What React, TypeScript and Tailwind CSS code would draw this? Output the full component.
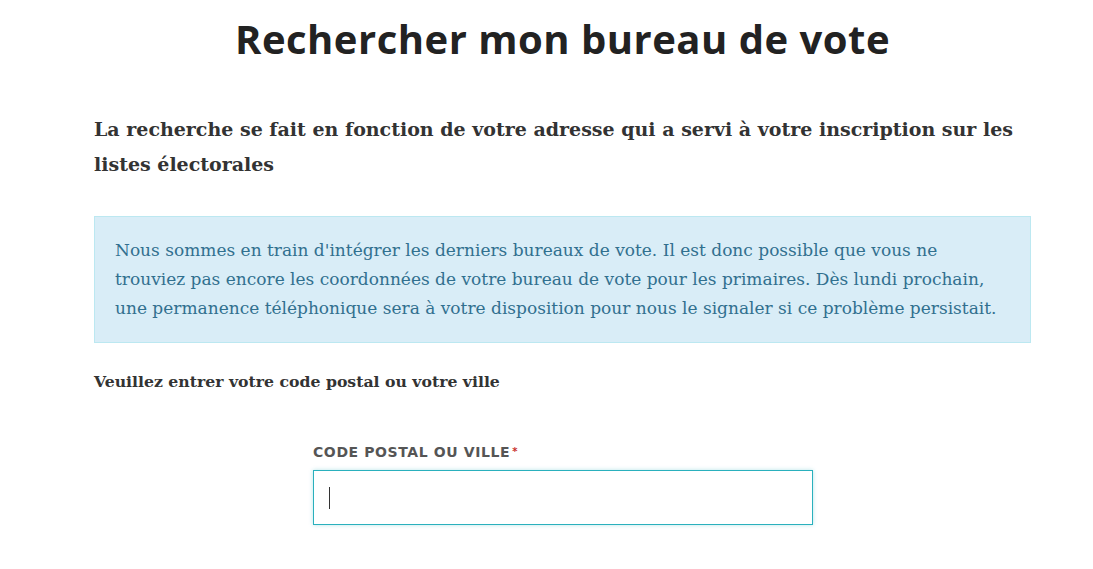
export default function App() {
  const serif = { fontFamily: '"DejaVu Serif", serif' };
  return (
    <div className="min-h-[569px] w-full bg-white">
      <div className="ml-[94px] w-[937px] pt-[14px]">
        <h1
          className="text-center text-[40px] font-bold leading-[50px] text-[#222] tracking-[0.5px]"
          style={{ fontFamily: '"Open Sans", sans-serif' }}
        >
          Rechercher mon bureau de vote
        </h1>

        <p className="mt-[48px] text-[19px] font-bold leading-[35px] text-[#333]" style={serif}>
          La recherche se fait en fonction de votre adresse qui a servi à votre inscription sur les listes électorales
        </p>

        <div className="mt-[34px] border border-[#bce8f1] bg-[#d9edf7] px-[20px] pt-[19px] pb-[19px]">
          <p className="text-[17px] leading-[29px] text-[#31708f]" style={serif}>
            Nous sommes en train d'intégrer les derniers bureaux de vote. Il est donc possible que vous ne trouviez pas encore les coordonnées de votre bureau de vote pour les primaires. Dès lundi prochain, une permanence téléphonique sera à votre disposition pour nous le signaler si ce problème persistait.
          </p>
        </div>

        <p className="mt-[27px] text-[15.7px] font-bold leading-[24px] text-[#333]" style={serif}>
          Veuillez entrer votre code postal ou votre ville
        </p>

        <div className="ml-[219px] mt-[49px] w-[500px]">
          <label
            className="block text-[14px] font-bold uppercase leading-[18px] tracking-[0.6px] text-[#555]"
            style={{ fontFamily: '"DejaVu Sans", sans-serif' }}
          >
            Code postal ou ville<span className="ml-[2px] align-top text-[10px] text-[#c9302c]">*</span>
          </label>
          <div className="mt-[9px] flex h-[55px] items-center border border-[#2ab0bd] px-[15px] shadow-[0_0_4px_rgba(42,176,189,0.35)]">
            <span className="h-[22px] w-px bg-[#333]" />
          </div>
        </div>
      </div>
    </div>
  );
}
